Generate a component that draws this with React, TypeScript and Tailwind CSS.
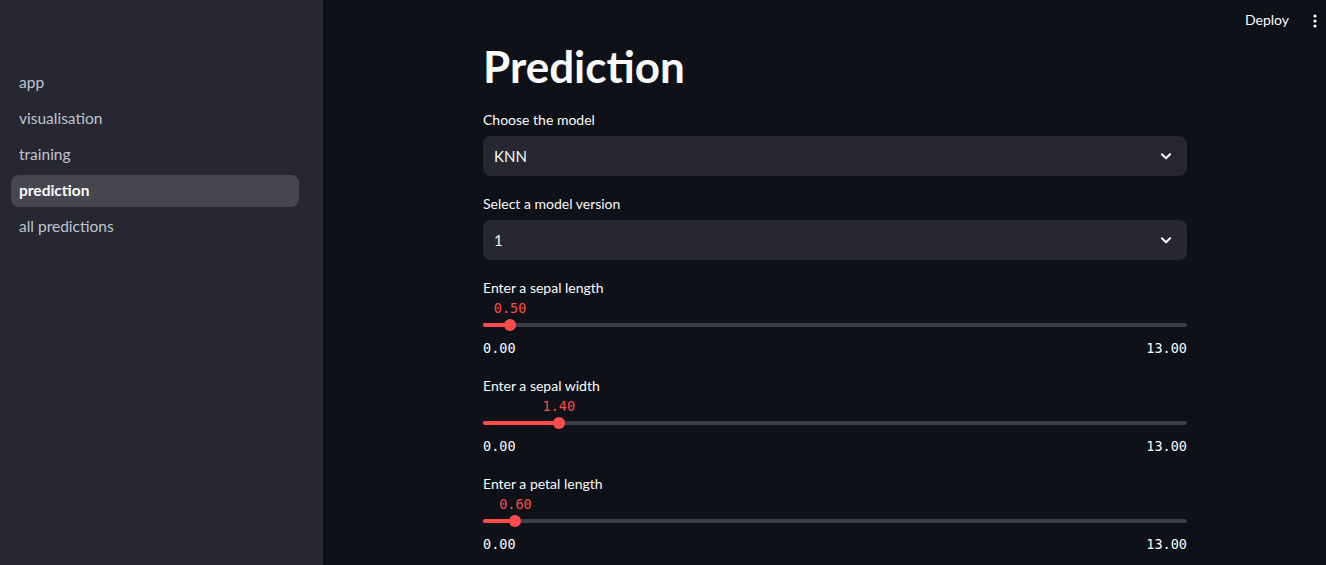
import React from "react";

const navItems = ["app", "visualisation", "training", "prediction", "all predictions"];

const sliders = [
  { label: "Enter a sepal length", value: 0.5 },
  { label: "Enter a sepal width", value: 1.4 },
  { label: "Enter a petal length", value: 0.6 },
];

const MIN = 0;
const MAX = 13;

function Chevron() {
  return (
    <svg width="14" height="14" viewBox="0 0 24 24" fill="none" stroke="#fafafa" strokeWidth="3.5" strokeLinecap="round" strokeLinejoin="round">
      <path d="M5 9l7 7 7-7" />
    </svg>
  );
}

function Select({ label, value }: { label: string; value: string }) {
  return (
    <div className="flex flex-col">
      <label className="mb-[6px] text-[14px] leading-[20px] text-[#fafafa]">{label}</label>
      <div className="flex h-[40px] items-center justify-between rounded-[8px] bg-[#262730] pl-[11px] pr-[14px]">
        <span className="text-[15px] text-[#fafafa]">{value}</span>
        <Chevron />
      </div>
    </div>
  );
}

function Slider({ label, value }: { label: string; value: number }) {
  const pct = ((value - MIN) / (MAX - MIN)) * 100;
  return (
    <div className="flex flex-col">
      <label className="text-[14px] leading-[20px] text-[#fafafa]">{label}</label>
      <div className="relative h-[38px]">
        <div className="absolute left-0 right-0 top-[25px] h-[4px] rounded-full bg-[#3b3d47]" />
        <div className="absolute left-0 top-[25px] h-[4px] rounded-full bg-[#ff4b4b]" style={{ width: `${pct}%` }} />
        <div
          className="absolute top-[21px] h-[12px] w-[12px] -translate-x-1/2 rounded-full bg-[#ff4b4b]"
          style={{ left: `${pct}%` }}
        />
        <div
          className="absolute top-[1px] -translate-x-1/2 font-['DejaVu_Sans_Mono',monospace] text-[13.5px] leading-[18px] text-[#ff4b4b]"
          style={{ left: `${pct}%` }}
        >
          {value.toFixed(2)}
        </div>
      </div>
      <div className="flex justify-between pt-[3px] font-['DejaVu_Sans_Mono',monospace] text-[13.5px] leading-[18px] text-[#fafafa]">
        <span>{MIN.toFixed(2)}</span>
        <span>{MAX.toFixed(2)}</span>
      </div>
    </div>
  );
}

export default function App() {
  return (
    <div className="flex h-[565px] w-full overflow-hidden bg-[#0e1117] font-['Lato','Noto_Sans',sans-serif]">
      <aside className="w-[323px] shrink-0 bg-[#262730] pl-[11px] pr-[24px] pt-[67px]">
        <nav className="flex flex-col gap-[4px]">
          {navItems.map((item) => {
            const active = item === "prediction";
            return (
              <div
                key={item}
                className={
                  active
                    ? "flex h-[32px] items-center rounded-[8px] bg-[#45464f] px-[8px] text-[15.5px] font-bold text-[#fafafa]"
                    : "flex h-[32px] items-center rounded-[8px] px-[8px] text-[15.5px] text-[#bfc5d3]"
                }
              >
                {item}
              </div>
            );
          })}
        </nav>
      </aside>
      <main className="flex flex-1 flex-col">
        <header className="flex h-[40px] items-start justify-end gap-[24px] pr-[9px] pt-[10px]">
          <span className="text-[14px] leading-[20px] text-[#fafafa]">Deploy</span>
          <svg className="mt-[4px]" width="4" height="14" viewBox="0 0 4 14" fill="#fafafa">
            <circle cx="2" cy="2" r="1.6" />
            <circle cx="2" cy="7" r="1.6" />
            <circle cx="2" cy="12" r="1.6" />
          </svg>
        </header>
        <div className="ml-[160px] flex w-[704px] flex-col">
          <h1 className="text-[44px] leading-[52px] font-bold text-[#fafafa]">Prediction</h1>
          <div className="mt-[18px] flex flex-col gap-[18px]">
            <Select label="Choose the model" value="KNN" />
            <Select label="Select a model version" value="1" />
          </div>
          <div className="mt-[18px] flex flex-col gap-[19px]">
            {sliders.map((s) => (
              <Slider key={s.label} label={s.label} value={s.value} />
            ))}
          </div>
        </div>
      </main>
    </div>
  );
}
